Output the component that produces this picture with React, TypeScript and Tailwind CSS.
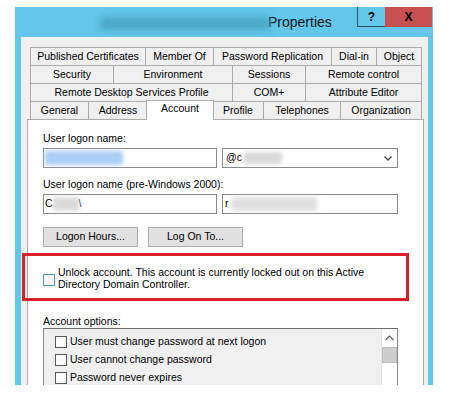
import React from 'react'

type Tab = { label: string; w: string; last?: boolean; selected?: boolean }

const row1: Tab[] = [
  { label: 'Published Certificates', w: 'w-[115px]' },
  { label: 'Member Of', w: 'w-[68px]' },
  { label: 'Password Replication', w: 'w-[118px]' },
  { label: 'Dial-in', w: 'w-[45px]' },
  { label: 'Object', w: 'w-[46px]', last: true },
]
const row2: Tab[] = [
  { label: 'Security', w: 'w-[83px]' },
  { label: 'Environment', w: 'w-[119px]' },
  { label: 'Sessions', w: 'w-[73px]' },
  { label: 'Remote control', w: 'w-[117px]', last: true },
]
const row3: Tab[] = [
  { label: 'Remote Desktop Services Profile', w: 'w-[202px]' },
  { label: 'COM+', w: 'w-[73px]' },
  { label: 'Attribute Editor', w: 'w-[117px]', last: true },
]
const row4: Tab[] = [
  { label: 'General', w: 'w-[58px]' },
  { label: 'Address', w: 'w-[59px]' },
  { label: 'Account', w: 'w-[65px]', selected: true },
  { label: 'Profile', w: 'w-[51px]' },
  { label: 'Telephones', w: 'w-[77px]' },
  { label: 'Organization', w: 'w-[82px]', last: true },
]

function TabRow({ tabs }: { tabs: Tab[] }) {
  return (
    <div className="flex h-[18px]">
      {tabs.map((t) => (
        <div
          key={t.label}
          className={`${t.w} relative h-full flex items-center justify-center border-t border-l border-[#acacac] bg-[#f0f0f0] ${t.last ? 'border-r' : ''}`}
        >
          {t.selected ? (
            // raised selected tab
            <div className="absolute -left-[2px] -right-[2px] -top-[2px] -bottom-px z-10 flex items-center justify-center pb-[3px] bg-white border-t border-l border-r border-[#acacac]">
              {t.label}
            </div>
          ) : (
            t.label
          )}
        </div>
      ))}
    </div>
  )
}

function Box({ className = '' }: { className?: string }) {
  return <span className={`block w-[12px] h-[12px] shrink-0 bg-[#fafafa] border border-[#555] ${className}`} />
}

export default function App() {
  return (
    <div className="relative w-[455px] h-[395px] overflow-hidden bg-white text-[10.5px] text-black font-['Liberation_Sans',Arial,sans-serif]">
      <div className="ml-[15px] mt-[7px] w-[418px] h-[378px] flex flex-col overflow-hidden bg-[#62c7e8]">
        {/* Title bar */}
        <div className="h-[30px] shrink-0 flex items-start">
          <div className="flex-1 h-full flex items-center pl-[85px]">
            <span className="block w-[170px] h-[13px] mt-[2px] rounded-sm bg-[#4aa8c6] blur-[3px]" />
            <span className="text-[14px] text-[#111] -ml-[2px]">Properties</span>
          </div>
          <div className="w-[28px] h-[20px] flex items-center justify-center border-l border-b border-[#2b5a70] text-[12px] font-bold">?</div>
          <div className="w-[47px] h-[20px] mr-px flex items-center justify-center bg-[#c75050] text-[12px] font-bold">X</div>
        </div>

        {/* Dialog body */}
        <div className="ml-[6px] mr-[5px] flex-1 overflow-hidden bg-[#f0f0f0] pt-[10px] pl-[6px] pr-[4px]">
          <div className="pl-[3px] pr-[2px]">
            <TabRow tabs={row1} />
            <TabRow tabs={row2} />
            <TabRow tabs={row3} />
            <TabRow tabs={row4} />
          </div>

          {/* Account page */}
          <div className="h-[300px] border border-[#acacac] bg-white pt-[11px] pl-[15px] flex flex-col">
            <div className="h-[14px] leading-[14px]">User logon name:</div>
            <div className="mt-[3px] flex gap-[5px]">
              <div className="w-[174px] h-[20px] border border-[#8a8a8a] bg-white flex items-center">
                <span className="block ml-px w-[78px] h-[14px] bg-[#a9cdf3] blur-[2px]" />
              </div>
              <div className="w-[176px] h-[20px] border border-[#8a8a8a] bg-white flex items-center pl-[3px] pr-[5px]">
                <span>@c</span>
                <span className="block ml-[2px] w-[38px] h-[12px] bg-[#d8d8d8] blur-[2px]" />
                <svg className="ml-auto" width="8" height="5" viewBox="0 0 8 5">
                  <path d="M0.5 0.5 L4 4 L7.5 0.5" fill="none" stroke="#444" strokeWidth="1.3" />
                </svg>
              </div>
            </div>

            <div className="mt-[9px] h-[14px] leading-[14px]">User logon name (pre-Windows 2000):</div>
            <div className="mt-[3px] flex gap-[5px]">
              <div className="w-[174px] h-[20px] border border-[#8a8a8a] bg-white flex items-center pl-px">
                <span>C</span>
                <span className="block w-[26px] h-[14px] bg-[#dadada] blur-[2px]" />
                <span>\</span>
              </div>
              <div className="w-[176px] h-[20px] border border-[#8a8a8a] bg-white flex items-center pl-[2px]">
                <span>r</span>
                <span className="block ml-[2px] w-[86px] h-[14px] bg-[#e0e0e0] blur-[2px]" />
              </div>
            </div>

            <div className="mt-[13px] flex gap-[10px]">
              <div className="w-[95px] h-[20px] border border-[#adadad] bg-[#e1e1e1] flex items-center justify-center">Logon Hours...</div>
              <div className="w-[95px] h-[20px] border border-[#adadad] bg-[#e1e1e1] flex items-center justify-center">Log On To...</div>
            </div>

            <div className="mt-[19px] flex items-start">
              <span className="block w-[12px] h-[12px] mt-[8px] shrink-0 border border-[#4f9bb5] bg-white" />
              <div className="ml-[3px] leading-[12px] whitespace-nowrap">
                Unlock account. This account is currently locked out on this Active
                <br />
                Directory Domain Controller.
              </div>
            </div>

            <div className="mt-[25px] h-[13px] leading-[13px]">Account options:</div>
            <div className="w-[355px] h-[80px] shrink-0 flex border border-[#828790] border-t-[#6f6f6f] bg-[#f0f0f0]">
              <div className="flex-1 pt-[4px] pl-[11px]">
                {['User must change password at next logon', 'User cannot change password', 'Password never expires'].map((o) => (
                  <div key={o} className="h-[18px] flex items-center">
                    <Box />
                    <span className="ml-[3px]">{o}</span>
                  </div>
                ))}
              </div>
              <div className="w-[16px] flex flex-col bg-white border-l border-[#e3e3e3]">
                <div className="h-[18px] flex items-center justify-center">
                  <svg width="9" height="6" viewBox="0 0 9 6">
                    <path d="M0.5 5 L4.5 1 L8.5 5" fill="none" stroke="#606060" strokeWidth="1.2" />
                  </svg>
                </div>
                <div className="h-[16px] bg-[#cdcdcd] border border-[#bfbfbf]" />
              </div>
            </div>
          </div>
        </div>
      </div>

      {/* annotation */}
      <div className="absolute left-[22px] top-[253px] w-[387px] h-[48px] border-[3px] border-[#dc2029]" />
    </div>
  )
}
